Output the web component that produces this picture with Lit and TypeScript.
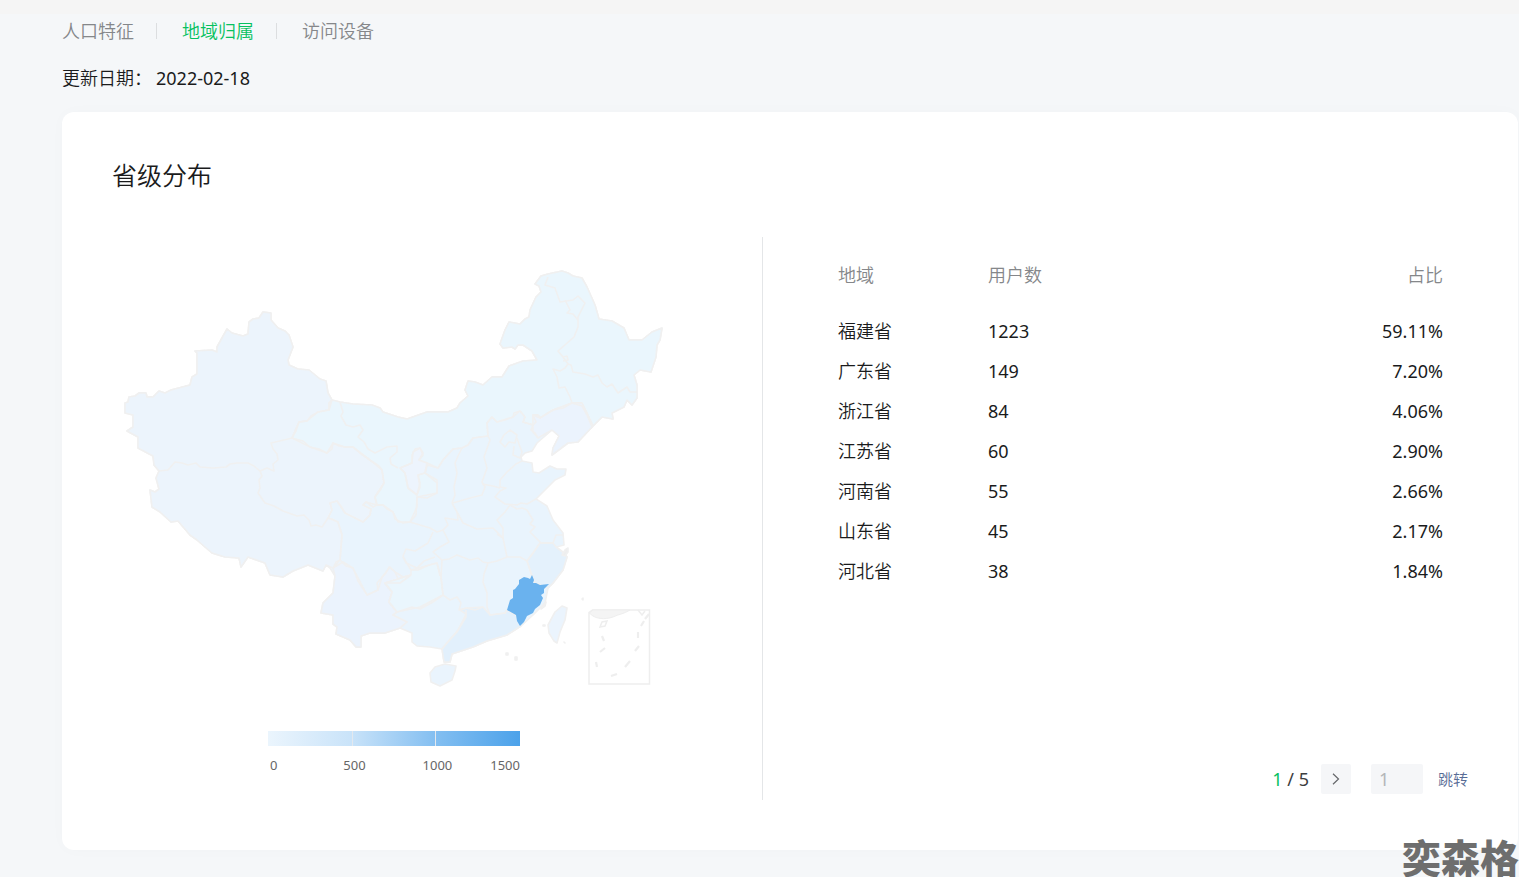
import { LitElement, html, svg, css } from "lit";
import { customElement, state } from "lit/decorators.js";

interface Region {
  name: string;
  users: number;
  share: string;
}

const REGIONS: Region[] = [
  { name: "福建省", users: 1223, share: "59.11%" },
  { name: "广东省", users: 149, share: "7.20%" },
  { name: "浙江省", users: 84, share: "4.06%" },
  { name: "江苏省", users: 60, share: "2.90%" },
  { name: "河南省", users: 55, share: "2.66%" },
  { name: "山东省", users: 45, share: "2.17%" },
  { name: "河北省", users: 38, share: "1.84%" },
];

/* Mainland silhouette, clockwise from the western tip. */
const LAND =
  "M125 413L125 403 128 402 129 397 135 396 139 393 146 393 147 397 153 397 159 391 165 393 171 390 190 385 192 377 197 374 197 353 195 351 212 350 217 352 217 347 227 329 232 333 243 336 248 334 249 322 253 319 259 318 263 312 271 313 271 320 278 328 285 331 289 335 293 347 288 360 289 365 298 369 309 370 320 379 326 381 328 393 332 400 340 402 353 404 372 405 380 408 383 412 398 417 407 419 427 412 448 412 457 408 460 403 468 396 465 390 468 381 475 382 483 385 492 377 502 377 509 366 523 361 537 360 532 351 523 345 518 345 515 349 512 347 503 348 500 344 505 330 509 322 520 324 525 319 529 317 530 310 536 297 541 292 539 286 535 284 541 276 548 274 562 271 568 273 573 276 582 278 587 287 595 305 599 319 612 321 624 328 629 340 642 340 652 332 662 328 660 340 657 345 656 357 651 372 640 370 634 375 637 385 637 398 632 405 627 400 624 407 612 413 613 419 602 417 593 426 578 442 568 443 552 455 553 448 559 436 552 430 537 443 532 451 525 453 521 457 522 461 532 463 533 472 539 473 550 466 557 469 566 469 565 475 555 480 542 493 536 499 547 506 553 520 563 533 564 545 556 547 564 553 567 557 563 570 553 583 548 588 545 603 533 615 521 626 507 635 487 641 473 647 452 654 450 662 444 662 442 649 430 647 417 646 412 642 412 633 400 628 385 633 370 633 361 636 361 647 356 647 350 640 336 634 337 627 333 624 333 615 321 613 323 603 333 593 335 576 330 568 326 565 323 571 308 565 293 571 283 577 270 575 265 563 248 557 241 567 239 558 225 557 212 553 205 547 197 540 190 535 178 521 171 522 160 512 152 507 150 490 155 492 159 489 156 478 159 471 154 465 153 456 138 448 138 437 127 431 133 427 133 415Z";

/* Tinted areas that sit on the base silhouette. */
const TINTS: { fill: string; d: string }[] = [
  {
    fill: "#ecf4fc",
    d: "M125 413L125 403 128 402 129 397 135 396 139 393 146 393 147 397 153 397 159 391 165 393 171 390 190 385 192 377 197 374 197 353 195 351 212 350 217 352 217 347 227 329 232 333 243 336 248 334 249 322 253 319 259 318 263 312 271 313 271 320 278 328 285 331 289 335 293 347 288 360 289 365 298 369 309 370 320 379 326 381 328 393 332 400 329 403 329 410 318 412 307 421 299 422 292 438 303 441 310 447 319 449 327 453 333 443 345 447 353 447 360 453 370 460 379 466 382 470 384 483 375 497 377 505 366 502 363 505 371 509 370 515 363 522 353 517 345 513 337 501 330 503 332 510 328 518 338 522 342 535 340 560 333 568 326 565 323 571 308 565 293 571 283 577 270 575 265 563 248 557 241 567 239 558 225 557 212 553 205 547 197 540 190 535 178 521 171 522 160 512 152 507 150 490 155 492 159 489 156 478 159 471 154 465 153 456 138 448 138 437 127 431 133 427 133 415Z",
  },
  {
    fill: "#eaf6fd",
    d: "M332 400L340 402 353 404 372 405 380 408 383 412 398 417 407 419 427 412 448 412 457 408 460 403 468 396 465 390 468 381 475 382 483 385 492 377 502 377 509 366 523 361 537 360 532 351 523 345 518 345 515 349 512 347 503 348 500 344 505 330 509 322 520 324 525 319 529 317 530 310 536 297 541 292 539 286 535 284 541 276 548 274 562 271 568 273 573 276 582 278 587 287 595 305 599 319 612 321 624 328 629 340 642 340 652 332 662 328 660 340 657 345 656 357 651 372 640 370 634 375 637 385 637 398 632 405 627 400 624 407 612 413 613 419 602 417 593 426 587 413 582 403 572 403 553 410 540 418 538 415 533 415 533 425 523 422 525 417 520 411 513 417 497 422 492 417 487 423 488 436 473 438 468 445 462 448 453 449 443 460 438 468 427 465 425 473 437 480 437 493 417 497 417 507 410 522 398 522 393 512 383 505 377 505 375 497 384 483 382 470 370 460 353 447 345 447 333 443 327 453 310 447 292 438 299 422 307 421 318 412 329 410Z",
  },
  {
    fill: "#edf4fd",
    d: "M400 468L405 473 408 488 417 495 420 483 418 475 425 473 427 463 419 460 423 455 420 448 413 452 412 463Z",
  },
  {
    fill: "#ebf3fd",
    d: "M593 426L578 442 568 443 552 455 553 448 559 436 552 430 538 438 533 432 533 415 540 418 553 410 572 403 582 403 587 413Z",
  },
  {
    fill: "#ebf3fd",
    d: "M343 562L353 568 367 595 378 590 382 577 390 567 395 572 403 577 411 575 385 583 392 592 389 602 397 612 393 615 407 622 400 628 385 633 370 633 361 636 361 647 356 647 350 640 336 634 337 627 333 624 333 615 321 613 323 603 333 593 335 576 333 568Z",
  },
  {
    fill: "#eaf6fd",
    d: "M411 570L437 563 441 577 443 595 420 607 397 612 389 602 392 592 385 583 411 575Z",
  },
  {
    fill: "#e4f1fc",
    d: "M527 561L533 553 540 543 553 543 556 547 564 553 567 557 563 570 553 583 548 588 535 583 532 576 530 570Z",
  },
  {
    fill: "#e2f0fc",
    d: "M460 610L467 608 483 607 490 615 505 613 507 610 516 615 521 626 507 635 487 641 473 647 452 654 450 662 444 662 442 649 458 630 466 614Z",
  },
];

/* Province boundaries. */
const BORDERS = [
  "M332 400L329 403 329 410 318 412 311 416 307 421 299 422 296 431 292 438 284 440 271 443 273 449 277 454 278 460 273 464 274 471 267 468 260 471 254 466 248 463 237 463 230 464 226 467 213 468 200 467 196 463 188 465 182 463 175 462 168 470 159 471",
  "M260 471L262 476 259 480 260 488 258 493 265 503 274 506 283 511 297 516 304 515 309 520 311 526 316 525 322 527 328 518 332 519 338 522 342 535 341 547 340 560 336 562 333 568",
  "M328 518L332 510 330 503 337 501 341 506 345 513 353 517 363 522 370 515 371 509 363 505 366 502 373 507 377 505",
  "M292 438L303 441 310 447 319 449 327 453 332 449 333 443 339 446 345 447 353 447 360 453 370 460 379 466 382 470 384 483 381 489 375 497 377 505 383 505 387 509 393 512 395 519 403 523 410 522",
  "M410 522L416 515 417 497 427 498 437 493 437 483 425 473 427 465",
  "M400 468L405 473 408 488 417 495 420 487 418 475 425 473",
  "M400 468L412 463 412 455 415 449 420 448 423 453 419 460 427 463 438 468",
  "M340 402L343 412 341 416 346 425 353 427 360 425 363 430 358 437 364 442 368 449 375 453 387 447 397 446 397 452 390 458 391 464 398 468",
  "M438 468L443 460 453 449 462 448 468 445 473 438 488 436",
  "M462 448L458 456 455 463 457 473 454 487 455 495 452 503",
  "M488 436L490 440 484 457 487 468 482 482 485 487 482 495 470 498 453 503",
  "M482 484L493 486 500 488",
  "M488 436L487 423 492 417 497 422 505 420 513 417 514 413 520 411 525 417 523 422 533 425 536 422 533 415 538 415 540 418 553 410 563 408 572 403",
  "M533 425L531 430 535 433 538 438",
  "M572 403L570 397 565 387 559 388 557 377 553 369 560 371 565 368 568 364 571 365 573 372 585 374 593 377 598 375 602 383 607 387 612 384 618 393 627 387 630 392 637 392",
  "M568 364L563 357 558 351 566 344 574 337 578 327 578 317 585 303 578 296 573 300 560 302 555 288 545 285 548 277",
  "M565 300L570 310 567 313 573 314 578 320",
  "M563 357L567 356 568 360 563 361",
  "M572 403L582 406 587 415 592 427",
  "M500 442L504 435 510 430 517 435 515 443 509 442 505 447Z",
  "M517 438L519 444 522 452 520 458 513 455 514 446",
  "M522 461L516 464 507 472 500 480 500 487 506 488 500 491 495 497 505 504 517 505 521 503 527 504 536 499",
  "M452 503L457 512 463 523 477 529 493 528 503 538 497 534",
  "M510 505L505 512 502 515 497 520 503 528 503 538 507 557",
  "M510 505L517 509 522 508 527 510 533 520 530 524 535 527 530 532 538 540 541 543 553 543 556 535 563 535",
  "M507 557L520 557 527 561 533 553 540 543",
  "M527 561L530 570 532 576",
  "M507 557L497 561 488 563 484 574 483 582 487 593 487 607 490 615 505 613 507 610",
  "M457 512L458 520 445 518 448 525 443 530 449 542 440 547 433 552 442 560 449 559 457 555 470 560 478 558 483 562 488 563",
  "M410 522L420 525 430 528 437 532 443 530",
  "M433 532L428 543 415 551 406 549 403 556 406 563 417 568 424 561 435 557",
  "M442 560L441 577 443 595 450 600 457 597 461 603 459 610 466 608 475 610 483 607",
  "M403 557L411 570 418 570 429 565 437 563 440 576",
  "M411 575L400 583 385 583 392 592 389 602 397 612 412 607 420 609 433 602 443 595",
  "M340 560L346 566 353 568 358 581 367 595 378 590 377 583 386 573 389 567 395 572 398 579 403 577 411 575",
  "M397 612L393 615 407 622 400 628",
  "M466 610L466 617 457 632 446 644 442 649",
];

const FUJIAN =
  "M532 575L530 579 528 578 524 577 519 580 519 584 515 589 513 590 513 598 510 600 507 610 516 615 517 621 520 626 524 622 527 616 533 613 535 609 540 605 543 598 541 595 544 593 544 589 549 584 540 585 536 583 533 583 534 580Z";
const HAINAN = "M435 667L445 664 456 666 455 671 452 680 440 686 431 682 430 673Z";
const TAIWAN = "M562 606L567 608 565 620 560 632 557 643 554 641 549 633 548 625 555 612Z";
const ISLETS =
  "M565 550l3-2v4l-3 4-3-1zM544 604l2-2-1 4-4 3zM543 625h2v1h-2zM582 599l1-1v2zM506 653h2v2h-2zM515 657h2v3h-2zM564 642l1 1z";
const DASHES =
  "M602 636l2 5M600 652l5-4M596 662l1 5M611 676l6-2M625 667l5-6M635 651l4-5M638 638v-6M641 626l3-5M645 619l4-5";

@customElement("app-root")
export class AppRoot extends LitElement {
  static styles = css`
    :host {
      display: block;
      position: relative;
      min-height: 100vh;
      box-sizing: border-box;
      overflow: hidden;
      background: #f5f7f9;
      color: #1a1b1c;
      font-family: "Noto Sans", "Noto Sans CJK SC", sans-serif;
      font-size: 18px;
      line-height: 24px;
    }
    .strip {
      height: 14px;
      background: #f5f5f5;
    }
    .page {
      padding: 5px 1px 27px 62px;
    }
    .tabs {
      display: flex;
      align-items: center;
      font-weight: 350;
    }
    .tab {
      color: #85878a;
      text-decoration: none;
    }
    .tab.active {
      color: #07c160;
    }
    .bar {
      width: 1px;
      height: 16px;
      margin: 0 25px 0 22px;
      background: #dcdee0;
    }
    .updated {
      display: flex;
      gap: 4px;
      margin: 23px 0 22px;
      font-weight: 350;
    }
    .updated time {
      font-weight: 400;
    }
    .card {
      padding: 43px 50px 50px;
      border-radius: 12px;
      background: #fff;
      box-shadow: 0 0 16px rgba(0, 0, 0, 0.02);
    }
    h2 {
      margin: 0 0 42px;
      font-size: 25px;
      line-height: 40px;
      font-weight: 350;
    }
    .columns {
      display: grid;
      grid-template-columns: 651fr 705fr;
    }
    .chart {
      padding: 25px 0 26px;
      border-right: 1px solid #e4e6e8;
    }
    .plot {
      width: 564px;
      max-width: 100%;
    }
    .map {
      display: block;
      width: 100%;
    }
    .legend {
      width: 252px;
      margin: 39px auto 0;
      color: #666;
      font-size: 13px;
      line-height: 18px;
    }
    .ramp {
      display: grid;
      grid-template-columns: 85px 83px 84px;
      height: 15px;
      background: linear-gradient(90deg, #ebf5fd, #c9e3f9 33%, #84bff1 66%, #4ca2ea);
    }
    .ramp i {
      border-right: 1px solid #e3e8ee;
    }
    .ticks {
      display: flex;
      justify-content: space-between;
      margin-top: 10px;
      padding-left: 2px;
    }
    .ticks span:nth-child(2) {
      padding-left: 28px;
    }
    .ticks span:nth-child(3) {
      padding-left: 19px;
    }
    .data {
      display: flex;
      flex-direction: column;
      justify-content: space-between;
      padding: 18px 0 6px 75px;
    }
    table {
      width: calc(100% - 25px);
      border-collapse: collapse;
      table-layout: fixed;
    }
    th,
    td {
      height: 40px;
      padding: 0;
      text-align: left;
      font-weight: 350;
    }
    th {
      color: #85878a;
    }
    thead th {
      padding-bottom: 16px;
    }
    .region,
    .users {
      width: 150px;
    }
    th:last-child,
    td:last-child {
      text-align: right;
    }
    td.num {
      font-weight: 400;
    }
    .pager {
      display: flex;
      justify-content: flex-end;
      align-items: center;
      color: #3c3e40;
    }
    .pager b {
      color: #07c160;
      font-weight: 400;
    }
    .next {
      display: flex;
      align-items: center;
      justify-content: center;
      width: 30px;
      height: 30px;
      margin: 0 20px 0 12px;
      padding: 0;
      border: 0;
      border-radius: 2px;
      background: #f5f6f8;
      cursor: pointer;
    }
    .goto {
      width: 52px;
      height: 30px;
      box-sizing: border-box;
      padding: 0 8px;
      border: 0;
      border-radius: 2px;
      background: #f5f6f8;
      font: inherit;
    }
    .goto::placeholder {
      color: #b4b6b8;
      opacity: 1;
    }
    .jump {
      margin-left: 15px;
      padding: 0;
      border: 0;
      background: none;
      color: #576b95;
      font: inherit;
      font-size: 15px;
      font-weight: 350;
      cursor: pointer;
    }
    .mark {
      position: absolute;
      right: 0;
      bottom: 0;
      color: #6e6e6e;
      font-family: "Noto Sans CJK SC", sans-serif;
      font-size: 39px;
      line-height: 42px;
      font-weight: 900;
      pointer-events: none;
    }
  `;

  @state() private page = 1;

  private renderMap() {
    return html`<svg class="map" viewBox="112 262 564 430" role="img" aria-label="省级分布">
      <g stroke="#f0f0f0" stroke-width="1.6" stroke-linejoin="round">
        <path d=${LAND} fill="#e9f4fd" />
        ${TINTS.map((t) => svg`<path d=${t.d} fill=${t.fill} />`)}
        ${BORDERS.map((d) => svg`<path d=${d} fill="none" />`)}
        <path d=${HAINAN} fill="#eaf4fd" />
        <path d=${TAIWAN} fill="#ebf4fd" />
        <path d=${ISLETS} fill="#eee" />
        <path d=${FUJIAN} fill="#6ab2ee" stroke="none" />
      </g>
      <g fill="none" stroke="#eee" stroke-width="1.5">
        <path d="M589 612.500L592.500 610H649.500V684H589Z" />
        <path d="M589.500 613C594 619 605 620 613 617C619 614 624 614 630 610H593Z" fill="#f4f4f4" stroke-width="1" />
        <path d="M638 610l4 5 3-4M600 627l2-5 5-1-2 5z" />
        <path d=${DASHES} stroke-width="2.200" />
      </g>
    </svg>`;
  }

  render() {
    return html`
      <div class="strip"></div>
      <main class="page">
        <nav class="tabs">
          <a class="tab" href="#people">人口特征</a>
          <span class="bar"></span>
          <a class="tab active" href="#region">地域归属</a>
          <span class="bar"></span>
          <a class="tab" href="#device">访问设备</a>
        </nav>
        <div class="updated"><span>更新日期：</span><time>2022-02-18</time></div>
        <section class="card">
          <h2>省级分布</h2>
          <div class="columns">
            <div class="chart">
              <div class="plot">
                ${this.renderMap()}
                <div class="legend">
                  <div class="ramp"><i></i><i></i></div>
                  <div class="ticks">
                    <span>0</span><span>500</span><span>1000</span><span>1500</span>
                  </div>
                </div>
              </div>
            </div>
            <div class="data">
              <table>
                <thead>
                  <tr>
                    <th class="region" scope="col">地域</th>
                    <th class="users" scope="col">用户数</th>
                    <th scope="col">占比</th>
                  </tr>
                </thead>
                <tbody>
                  ${REGIONS.map(
                    (r) => html`<tr>
                      <td>${r.name}</td>
                      <td class="num">${r.users}</td>
                      <td class="num">${r.share}</td>
                    </tr>`
                  )}
                </tbody>
              </table>
              <div class="pager">
                <span><b>${this.page}</b> / 5</span>
                <button class="next" aria-label="下一页" @click=${() => (this.page = Math.min(5, this.page + 1))}>
                  <svg width="8" height="12" viewBox="0 0 8 12" fill="none" stroke="#65676a" stroke-width="1.200">
                    <path d="M1 0.800L6.500 6L1 11.200" />
                  </svg>
                </button>
                <input class="goto" type="text" placeholder="1" aria-label="页码" />
                <button class="jump">跳转</button>
              </div>
            </div>
          </div>
        </section>
      </main>
      <div class="mark">奕森格</div>
    `;
  }
}
